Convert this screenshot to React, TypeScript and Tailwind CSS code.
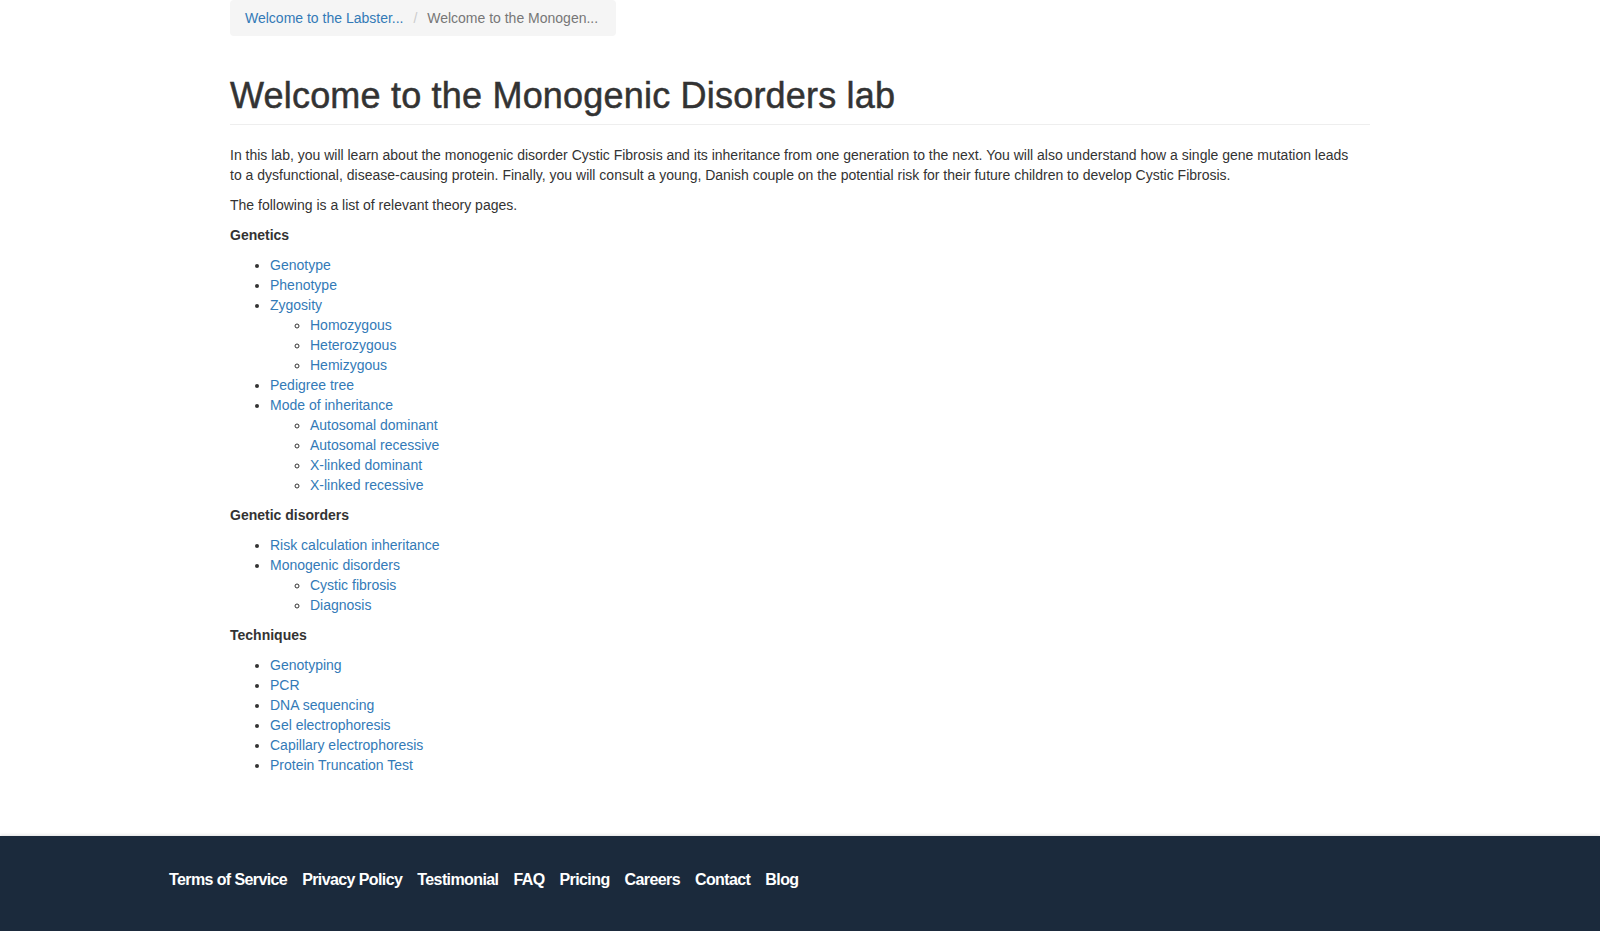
import React from "react";

type Item = { label: string; children?: string[] };

const sections: { title: string; items: Item[] }[] = [
  {
    title: "Genetics",
    items: [
      { label: "Genotype" },
      { label: "Phenotype" },
      { label: "Zygosity", children: ["Homozygous", "Heterozygous", "Hemizygous"] },
      { label: "Pedigree tree" },
      {
        label: "Mode of inheritance",
        children: ["Autosomal dominant", "Autosomal recessive", "X-linked dominant", "X-linked recessive"],
      },
    ],
  },
  {
    title: "Genetic disorders",
    items: [
      { label: "Risk calculation inheritance" },
      { label: "Monogenic disorders", children: ["Cystic fibrosis", "Diagnosis"] },
    ],
  },
  {
    title: "Techniques",
    items: [
      { label: "Genotyping" },
      { label: "PCR" },
      { label: "DNA sequencing" },
      { label: "Gel electrophoresis" },
      { label: "Capillary electrophoresis" },
      { label: "Protein Truncation Test" },
    ],
  },
];

const footerLinks = ["Terms of Service", "Privacy Policy", "Testimonial", "FAQ", "Pricing", "Careers", "Contact", "Blog"];

export default function App() {
  return (
    <div
      className="min-h-[931px] flex flex-col bg-white text-[#333] text-[14px] leading-[20px]"
      style={{ fontFamily: '"Liberation Sans", Arial, Helvetica, sans-serif' }}
    >
      <main className="flex-1 w-[1140px] mx-auto pb-[51px]">
        <div className="inline-flex items-center bg-[#f5f5f5] rounded-[4px] pl-[15px] pr-[18px] pt-[8px] pb-[8px]">
          <a className="text-[#337ab7]" href="#">Welcome to the Labster...</a>
          <span className="text-[#ccc] px-[6px]">{"\u00a0/\u00a0"}</span>
          <span className="text-[#777]">Welcome to the Monogen...</span>
        </div>

        <div className="mt-[40px] pb-[8px] border-b border-[#eee] mb-[20px]">
          <h1 className="text-[36px] leading-[40px] tracking-[0.2px] text-[#333] [-webkit-text-stroke:0.5px_#333]">
            Welcome to the Monogenic Disorders lab
          </h1>
        </div>

        <p className="mb-[10px]">
          In this lab, you will learn about the monogenic disorder Cystic Fibrosis and its inheritance from one generation to the next. You will also understand how a single gene mutation leads
          <br />
          to a dysfunctional, disease-causing protein. Finally, you will consult a young, Danish couple on the potential risk for their future children to develop Cystic Fibrosis.
        </p>
        <p className="mb-[10px]">The following is a list of relevant theory pages.</p>

        {sections.map((s) => (
          <div key={s.title}>
            <p className="mb-[10px] font-bold">{s.title}</p>
            <ul className="list-disc pl-[40px] mb-[10px]">
              {s.items.map((it) => (
                <li key={it.label}>
                  <a className="text-[#337ab7]" href="#">{it.label}</a>
                  {it.children && (
                    <ul className="list-[circle] pl-[40px]">
                      {it.children.map((c) => (
                        <li key={c}>
                          <a className="text-[#337ab7]" href="#">{c}</a>
                        </li>
                      ))}
                    </ul>
                  )}
                </li>
              ))}
            </ul>
          </div>
        ))}
      </main>

      <footer className="bg-[#1b2a3c] h-[96px] shadow-[0_-1px_3px_rgba(0,0,0,0.12)]">
        <nav className="flex gap-[15px] pl-[169px] pt-[34px] text-[16px] leading-[20px] font-bold tracking-[-0.6px] text-white">
          {footerLinks.map((l) => (
            <a key={l} href="#" className="text-white">{l}</a>
          ))}
        </nav>
      </footer>
    </div>
  );
}
